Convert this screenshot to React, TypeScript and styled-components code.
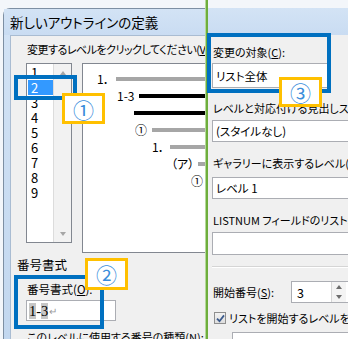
import React from "react"
import styled, { createGlobalStyle } from "styled-components"

const GlobalStyle = createGlobalStyle`
  html, body {
    margin: 0;
    padding: 0;
    background: #f3f6fa;
  }
`

const FONT = `"Noto Sans CJK JP", "Noto Sans", sans-serif`

const Screen = styled.div`
  position: relative;
  width: 348px;
  height: 339px;
  overflow: hidden;
  display: flex;
  background: #f3f6fa;
  font-family: ${FONT};
  font-feature-settings: "palt";
  color: #000;
`

const LeftSide = styled.div`
  width: 205px;
  flex: none;
  display: flex;
  flex-direction: column;
  padding-top: 8px;
  box-sizing: border-box;
  overflow: hidden;
`

const WindowFrame = styled.div`
  flex: 1;
  min-height: 0;
  margin-left: 3px;
  display: flex;
  flex-direction: column;
  border-left: 1px solid #7d8fa3;
  border-top: 1px solid #7d8fa3;
  border-top-left-radius: 7px;
  background: linear-gradient(#d3e3f5, #c2d7ef);
`

const TitleBar = styled.div`
  height: 26px;
  flex: none;
  display: flex;
  align-items: center;
  padding-left: 6px;
  font-size: 13.5px;
  white-space: nowrap;
  background: linear-gradient(#d3e3f5, #c9dcf2);
`

const Client = styled.div`
  flex: 1;
  min-height: 0;
  margin-left: 6px;
  background: #f0f0f0;
  border-left: 1px solid #a9bcd2;
  border-top: 1px solid #a9bcd2;
  display: flex;
  flex-direction: column;
  overflow: hidden;
`

const Label = styled.div<{ $indent?: number; $gap?: number; $size?: number; $tight?: boolean }>`
  flex: none;
  margin-left: ${(p) => p.$indent ?? 0}px;
  margin-top: ${(p) => p.$gap ?? 0}px;
  height: 16px;
  line-height: 16px;
  font-size: ${(p) => p.$size ?? 11}px;
  letter-spacing: ${(p) => (p.$tight ? "-0.5px" : "0")};
  white-space: nowrap;
`

const ListRow = styled.div`
  flex: none;
  display: flex;
  align-items: flex-start;
  gap: 10px;
  margin-left: 15px;
  margin-top: 6px;
  height: 190px;
`

const LevelList = styled.div`
  width: 46px;
  height: 180px;
  flex: none;
  box-sizing: border-box;
  border: 1px solid #828790;
  background: #fff;
  display: flex;
`

const LevelItems = styled.div`
  flex: 1;
  padding-top: 1px;
`

const LevelItem = styled.div<{ $selected?: boolean }>`
  height: 15px;
  line-height: 15px;
  margin-left: 1px;
  padding-left: 3px;
  font-size: 13px;
  color: ${(p) => (p.$selected ? "#fff" : "#000")};
  background: ${(p) => (p.$selected ? "#3399ff" : "transparent")};
`

const ScrollTrack = styled.div`
  width: 18px;
  flex: none;
  box-sizing: border-box;
  border-left: 1px solid #dcdcdc;
  background: #f2f2f2;
  display: flex;
  flex-direction: column;
  justify-content: space-between;
`

const ScrollButton = styled.div`
  height: 17px;
  display: flex;
  align-items: center;
  justify-content: center;
`

const Arrow = styled.span<{ $dir: "up" | "down"; $color?: string }>`
  width: 0;
  height: 0;
  border-left: 3.5px solid transparent;
  border-right: 3.5px solid transparent;
  ${(p) =>
    p.$dir === "up"
      ? `border-bottom: 4px solid ${p.$color ?? "#a6a6a6"};`
      : `border-top: 4px solid ${p.$color ?? "#a6a6a6"};`}
`

const Preview = styled.div`
  width: 150px;
  height: 190px;
  flex: none;
  box-sizing: border-box;
  border: 1px solid #828790;
  background: #fff;
  padding-top: 6px;
`

const PreviewRow = styled.div<{ $indent: number }>`
  height: 17px;
  display: flex;
  align-items: center;
  padding-left: ${(p) => p.$indent}px;
`

const PreviewNumber = styled.span<{ $width: number }>`
  width: ${(p) => p.$width}px;
  flex: none;
  font-size: 12px;
  line-height: 17px;
  white-space: nowrap;
  overflow: hidden;
`

const PreviewBar = styled.span<{ $strong?: boolean }>`
  flex: 1;
  height: 4px;
  margin-top: 1px;
  background: ${(p) => (p.$strong ? "#000" : "#a6a6a6")};
`

const NumberInput = styled.div`
  flex: none;
  margin-left: 15px;
  margin-top: 3px;
  width: 90px;
  height: 21px;
  box-sizing: border-box;
  border: 1px solid #abadb3;
  background: #fff;
  display: flex;
  align-items: center;
  padding-left: 2px;
  font-family: "Liberation Serif", "DejaVu Serif", serif;
  font-size: 14.5px;
`

const Field = styled.span<{ $marked?: boolean }>`
  background: ${(p) => (p.$marked ? "#c6c6c6" : "transparent")};
  line-height: 16px;
`

const ReturnMark = styled.span`
  color: #9a9a9a;
  font-family: ${FONT};
  font-size: 10px;
  margin-left: 1px;
`

const GreenRule = styled.div`
  width: 3px;
  flex: none;
  background: #6eae3c;
  border-left: 1px solid #b4d89a;
  box-sizing: border-box;
`

const RightSide = styled.div`
  flex: 1;
  min-width: 0;
  display: flex;
  flex-direction: column;
  padding-top: 8px;
  overflow: hidden;
`

const TitleFill = styled.div`
  height: 27px;
  flex: none;
  background: linear-gradient(#d3e3f5, #c9dcf2);
`

const RightClient = styled.div`
  flex: 1;
  background: #f0f0f0;
  display: flex;
  flex-direction: column;
  padding-left: 4px;
`

const Combo = styled.div<{ $gap: number; $width?: number; $height?: number }>`
  flex: none;
  margin-top: ${(p) => p.$gap}px;
  width: ${(p) => p.$width ?? 160}px;
  height: ${(p) => p.$height ?? 22}px;
  box-sizing: border-box;
  border: 1px solid #abadb3;
  background: #fff;
  display: flex;
  align-items: center;
  padding-left: 3px;
  font-size: 11.5px;
  white-space: nowrap;
`

const Separator = styled.div`
  flex: none;
  margin-top: 11px;
  height: 1px;
  background: #d5d5d5;
  border-bottom: 1px solid #fff;
`

const SpinRow = styled.div`
  flex: none;
  margin-top: 13px;
  height: 22px;
  display: flex;
  align-items: center;
`

const SpinLabel = styled.span`
  width: 79px;
  flex: none;
  padding-left: 1px;
  box-sizing: border-box;
  font-size: 11px;
  white-space: nowrap;
`

const SpinBox = styled.div`
  width: 60px;
  height: 22px;
  flex: none;
  box-sizing: border-box;
  border: 1px solid #abadb3;
  background: #fff;
  display: flex;
  align-items: center;
  padding-left: 5px;
  font-size: 12.5px;
`

const SpinValue = styled.span`
  flex: 1;
`

const SpinButtons = styled.div`
  width: 14px;
  height: 100%;
  display: flex;
  flex-direction: column;
  border-left: 1px solid #d6d6d6;
  background: #f4f4f4;
  margin-right: 4px;
`

const SpinHalf = styled.div`
  flex: 1;
  display: flex;
  align-items: center;
  justify-content: center;
`

const CheckRow = styled.div`
  flex: none;
  margin-top: 7px;
  height: 16px;
  display: flex;
  align-items: center;
  font-size: 11px;
  white-space: nowrap;
`

const CheckBox = styled.span`
  width: 12px;
  height: 12px;
  margin-left: 2px;
  margin-right: 3px;
  flex: none;
  box-sizing: border-box;
  border: 1px solid #8f8f8f;
  background: linear-gradient(#f2f2f2, #dedede);
  display: flex;
  align-items: center;
  justify-content: center;
`

const LowerInput = styled.div`
  flex: none;
  margin-top: 6px;
  margin-left: 20px;
  width: 140px;
  height: 22px;
  box-sizing: border-box;
  border: 1px solid #abadb3;
  background: #fff;
`

const CalloutFrame = styled.div<{ $x: number; $y: number; $w: number; $h: number }>`
  position: absolute;
  left: ${(p) => p.$x}px;
  top: ${(p) => p.$y}px;
  width: ${(p) => p.$w}px;
  height: ${(p) => p.$h}px;
  box-sizing: border-box;
  border: 4px solid #0070c0;
`

const Badge = styled.div<{ $x: number; $y: number; $w: number; $h: number }>`
  position: absolute;
  left: ${(p) => p.$x}px;
  top: ${(p) => p.$y}px;
  width: ${(p) => p.$w}px;
  height: ${(p) => p.$h}px;
  box-sizing: border-box;
  border: 3px solid #ffc000;
  background: #fff;
  display: flex;
  align-items: center;
  justify-content: center;
  font-size: 21px;
  color: #3a8ddb;
`

const levels = ["1", "2", "3", "4", "5", "6", "7", "8", "9"]

const previewRows = [
  { indent: 14, num: "1．", width: 19 },
  { indent: 34, num: "1-3", width: 22, strong: true },
  { indent: 51, num: "", width: 0, strong: true },
  { indent: 52, num: "①", width: 17 },
  { indent: 69, num: "1．", width: 18 },
  { indent: 88, num: "（ア）", width: 27 },
  { indent: 108, num: "①", width: 18 },
  { indent: 126, num: "1．", width: 18 },
  { indent: 143, num: "（ア）", width: 27 },
]

const callouts = [
  { x: 14, y: 75, w: 63, h: 25 },
  { x: 14, y: 275, w: 90, h: 54 },
  { x: 207, y: 33, w: 124, h: 60 },
]

const badges = [
  { x: 62, y: 93, w: 43, h: 31, mark: "①" },
  { x: 85, y: 258, w: 43, h: 32, mark: "②" },
  { x: 279, y: 77, w: 43, h: 30, mark: "③" },
]

export default function App() {
  return (
    <Screen>
      <GlobalStyle />
      <LeftSide>
        <WindowFrame>
          <TitleBar>新しいアウトラインの定義</TitleBar>
          <Client>
            <Label $indent={16} $gap={5} $tight>
              変更するレベルをクリックしてください(<u>V</u>):
            </Label>
            <ListRow>
              <LevelList>
                <LevelItems>
                  {levels.map((l) => (
                    <LevelItem key={l} $selected={l === "2"}>
                      {l}
                    </LevelItem>
                  ))}
                </LevelItems>
                <ScrollTrack>
                  <ScrollButton>
                    <Arrow $dir="up" />
                  </ScrollButton>
                  <ScrollButton>
                    <Arrow $dir="down" />
                  </ScrollButton>
                </ScrollTrack>
              </LevelList>
              <Preview>
                {previewRows.map((r, i) => (
                  <PreviewRow key={i} $indent={r.indent}>
                    <PreviewNumber $width={r.width}>{r.num}</PreviewNumber>
                    <PreviewBar $strong={r.strong} />
                  </PreviewRow>
                ))}
              </Preview>
            </ListRow>
            <Label $indent={6} $gap={4} $size={12.5}>
              番号書式
            </Label>
            <Label $indent={16} $gap={8} $size={11.5}>
              番号書式(<u>O</u>):
            </Label>
            <NumberInput>
              <Field $marked>1</Field>
              <Field>-</Field>
              <Field $marked>3</Field>
              <ReturnMark>↵</ReturnMark>
            </NumberInput>
            <Label $indent={16} $gap={8}>
              このレベルに使用する番号の種類(<u>N</u>):
            </Label>
          </Client>
        </WindowFrame>
      </LeftSide>
      <GreenRule />
      <RightSide>
        <TitleFill />
        <RightClient>
          <Label $indent={1} $gap={9}>
            変更の対象(<u>C</u>):
          </Label>
          <Combo $gap={3} $width={117} $height={25}>
            リスト全体
          </Combo>
          <Label $indent={1} $gap={12}>
            レベルと対応付ける見出しスタイル(<u>K</u>):
          </Label>
          <Combo $gap={4}>(スタイルなし)</Combo>
          <Label $indent={1} $gap={13}>
            ギャラリーに表示するレベル(<u>H</u>):
          </Label>
          <Combo $gap={6}>レベル 1</Combo>
          <Label $indent={1} $gap={13}>
            LISTNUM フィールドのリスト名(<u>T</u>):
          </Label>
          <Combo $gap={4} $height={23} />
          <Separator />
          <SpinRow>
            <SpinLabel>
              開始番号(<u>S</u>):
            </SpinLabel>
            <SpinBox>
              <SpinValue>3</SpinValue>
              <SpinButtons>
                <SpinHalf>
                  <Arrow $dir="up" $color="#6d6d6d" />
                </SpinHalf>
                <SpinHalf>
                  <Arrow $dir="down" $color="#6d6d6d" />
                </SpinHalf>
              </SpinButtons>
            </SpinBox>
          </SpinRow>
          <CheckRow>
            <CheckBox>
              <svg width="9" height="9" viewBox="0 0 9 9">
                <path d="M1 4.6 L3.5 7.2 L8 1.4" stroke="#3b5a8c" strokeWidth="1.8" fill="none" />
              </svg>
            </CheckBox>
            リストを開始するレベルを指定する(<u>R</u>):
          </CheckRow>
          <LowerInput />
        </RightClient>
      </RightSide>
      {callouts.map((c, i) => (
        <CalloutFrame key={i} $x={c.x} $y={c.y} $w={c.w} $h={c.h} />
      ))}
      {badges.map((b) => (
        <Badge key={b.mark} $x={b.x} $y={b.y} $w={b.w} $h={b.h}>
          {b.mark}
        </Badge>
      ))}
    </Screen>
  )
}
